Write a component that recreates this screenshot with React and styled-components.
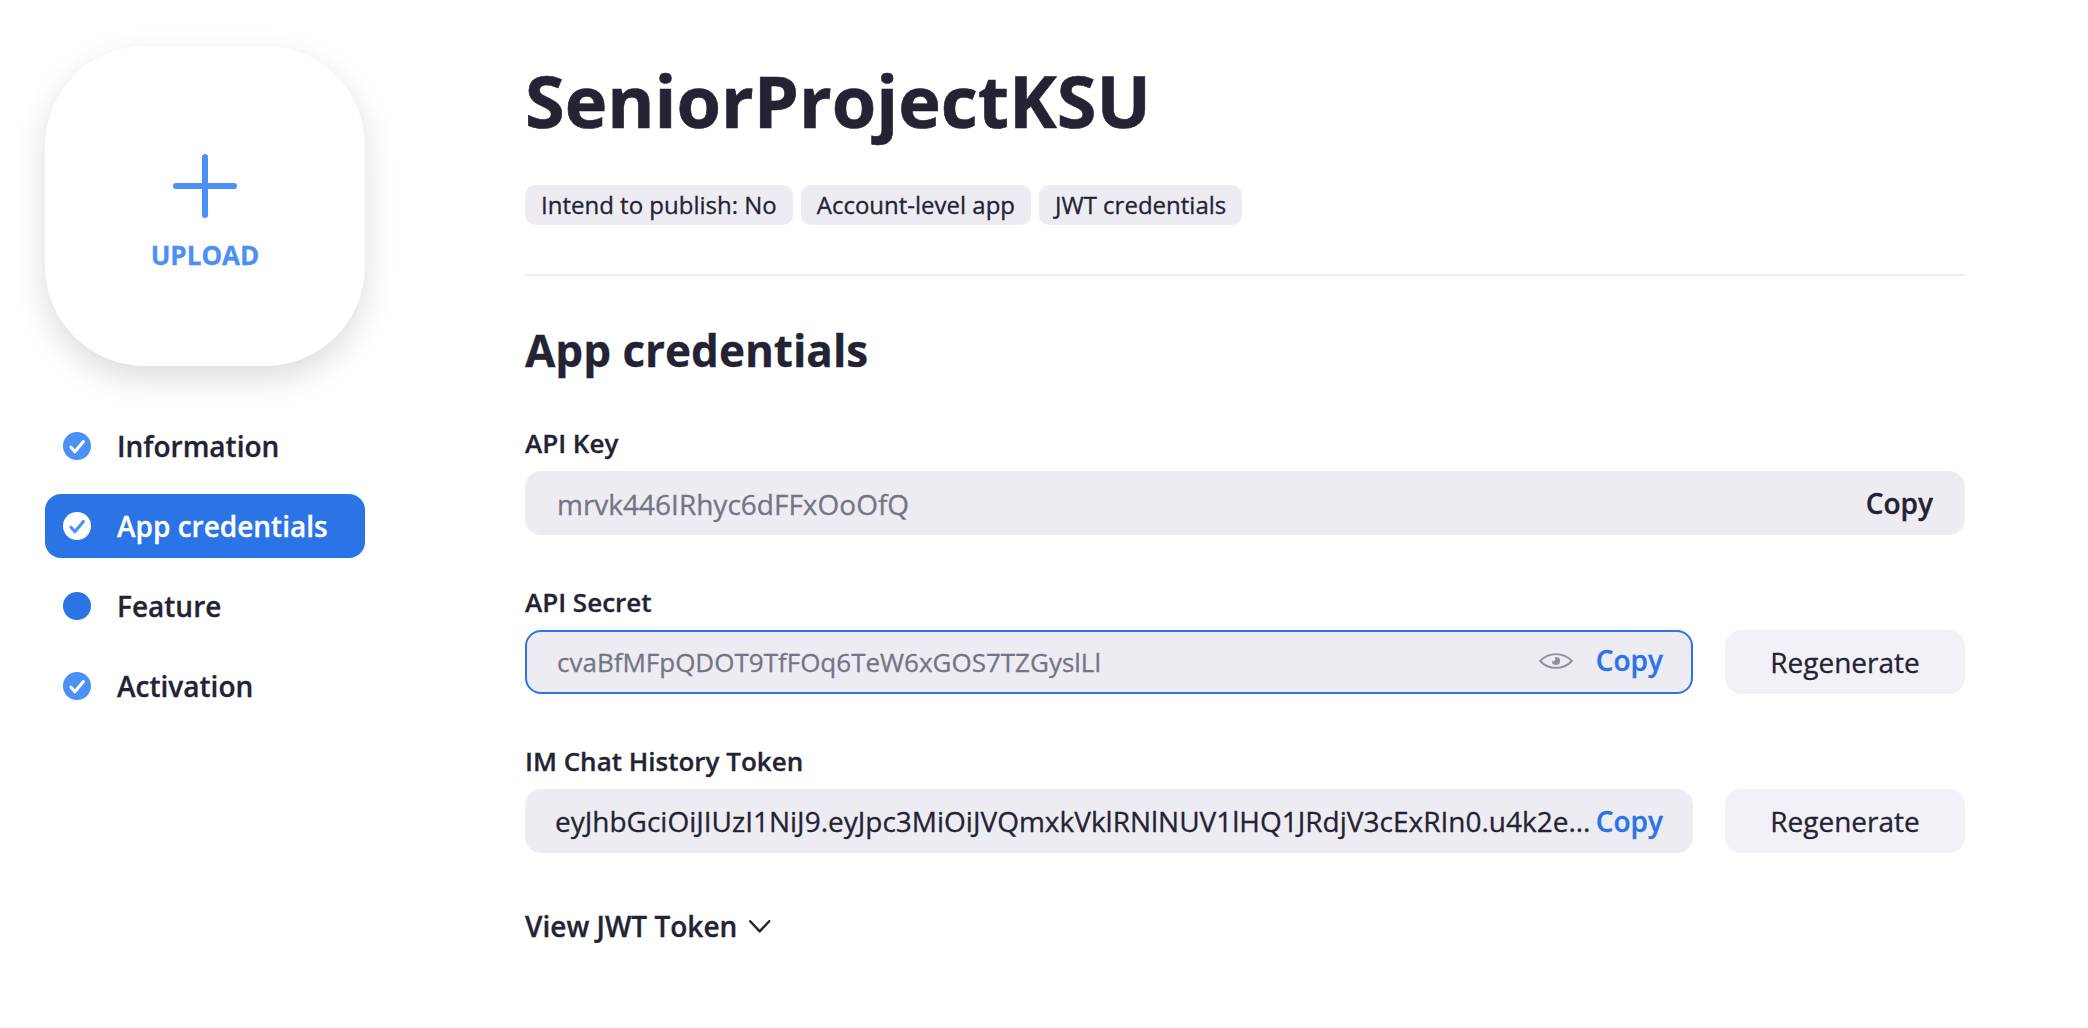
import React from 'react';
import styled, { createGlobalStyle, css } from 'styled-components';

const GlobalStyle = createGlobalStyle`
  * { box-sizing: border-box; }
  body {
    margin: 0;
    background: #ffffff;
    color: #232333;
    font-family: 'Open Sans', sans-serif;
    -webkit-text-stroke: 0.3px currentColor;
  }
  button { font: inherit; color: inherit; border: 0; padding: 0; margin: 0; background: none; cursor: pointer; }
  svg { display: block; flex: none; }
`;

const Page = styled.div`
  display: flex;
  align-items: flex-start;
  gap: 160px;
  width: 2088px;
  height: 1028px;
  padding: 46px 123px 0 45px;
  overflow: hidden;
`;

const Sidebar = styled.aside`
  width: 320px;
  flex: none;
`;

const UploadTile = styled.button`
  display: flex;
  flex-direction: column;
  align-items: center;
  width: 320px;
  height: 320px;
  padding-top: 108px;
  border-radius: 100px;
  background: #ffffff;
  box-shadow: 0 12px 32px rgba(0, 0, 0, 0.14);
`;

const UploadLabel = styled.span`
  margin-top: 19px;
  color: #4a90f5;
  font-size: 26px;
  line-height: 36px;
  font-weight: 700;
`;

const Steps = styled.nav`
  display: flex;
  flex-direction: column;
  gap: 16px;
  margin-top: 48px;
`;

const Step = styled.a`
  display: flex;
  align-items: center;
  gap: 26px;
  height: 64px;
  padding-left: 18px;
  border-radius: 16px;
  font-size: 28px;
  font-weight: 600;
  line-height: 38px;
  ${({ $active }) => $active && css`
    background: #2b74e6;
    color: #ffffff;
  `}
`;

const Main = styled.main`
  flex: 1;
  min-width: 0;
`;

const Title = styled.h1`
  margin: 5px 0 0;
  font-size: 72px;
  line-height: 98px;
  font-weight: 700;
  -webkit-text-stroke-width: 0.6px;
`;

const Tags = styled.div`
  display: flex;
  gap: 8px;
  margin-top: 36px;
`;

const Tag = styled.span`
  height: 40px;
  padding: 0 16px;
  border-radius: 10px;
  background: #edecf3;
  font-size: 24px;
  line-height: 40px;
`;

const Divider = styled.hr`
  height: 2px;
  margin: 49px 0 0;
  border: 0;
  background: #edecf3;
`;

const SectionTitle = styled.h2`
  margin: 44px 0 0;
  font-size: 44px;
  line-height: 60px;
  font-weight: 700;
`;

const Field = styled.section`
  margin-top: ${({ $top }) => $top}px;
`;

const FieldLabel = styled.div`
  height: 36px;
  font-size: 26px;
  line-height: 36px;
  font-weight: 600;
`;

const FieldRow = styled.div`
  display: flex;
  gap: 32px;
  margin-top: 10px;
`;

const ValueBox = styled.div`
  display: flex;
  align-items: center;
  flex: 1;
  min-width: 0;
  height: 64px;
  padding: 0 ${({ $focused }) => ($focused ? 28 : 30)}px;
  border: ${({ $focused }) => ($focused ? '2px solid #2b74e6' : '0')};
  border-radius: 16px;
  background: #edecf3;
`;

const Value = styled.span`
  flex: 1;
  min-width: 0;
  overflow: hidden;
  white-space: nowrap;
  padding-left: ${({ $inset }) => $inset || 0}px;
  padding-top: ${({ $drop }) => $drop || 0}px;
  color: ${({ $muted }) => ($muted ? '#747487' : '#232333')};
  font-size: ${({ $size }) => $size || 28}px;
  line-height: 40px;
`;

const CopyButton = styled.button`
  margin-left: ${({ $gap }) => $gap || 0}px;
  margin-right: ${({ $end }) => $end || 0}px;
  padding-bottom: ${({ $lift }) => $lift || 0}px;
  color: ${({ $link }) => ($link ? '#2b74e6' : '#232333')};
  font-size: 28px;
  line-height: 38px;
  font-weight: 600;
`;

const RegenerateButton = styled.button`
  flex: none;
  width: 240px;
  height: 64px;
  border-radius: 16px;
  background: #f2f1f7;
  font-size: 28px;
  line-height: 38px;
`;

const TokenToggle = styled.button`
  display: flex;
  align-items: center;
  gap: 12px;
  margin-top: 54px;
  font-size: 28px;
  line-height: 38px;
  font-weight: 600;
`;

const PlusIcon = () => (
  <svg width="64" height="64" viewBox="0 0 64 64">
    <path d="M32 3V61M3 32H61" stroke="#4a90f5" strokeWidth="6" strokeLinecap="round" />
  </svg>
);

const StepIcon = ({ fill, check }) => (
  <svg width="28" height="28" viewBox="0 0 28 28">
    <circle cx="14" cy="14" r="14" fill={fill} />
    {check && (
      <path d="M8 15.2L11.9 19.8L20.4 9.4" fill="none" stroke={check} strokeWidth="3.1" strokeLinecap="round" strokeLinejoin="round" />
    )}
  </svg>
);

const EyeIcon = () => (
  <svg width="34" height="18" viewBox="0 0 34 18">
    <path d="M1.2 8C9.5-1.2 24.5-1.2 32.8 8C24.5 17.2 9.5 17.2 1.2 8Z" fill="none" stroke="#8f8fa0" strokeWidth="1.9" strokeLinejoin="round" />
    <path d="M17 3.9A4.1 4.1 0 1 1 12.9 8V7.4A1.9 1.9 0 0 0 16 5V4Z" fill="#8f8fa0" />
  </svg>
);

const ChevronIcon = () => (
  <svg width="22" height="14" viewBox="0 0 22 14">
    <path d="M1.2 2.2L10.7 12.4L20.2 2.2" fill="none" stroke="#232333" strokeWidth="2.4" strokeLinecap="round" strokeLinejoin="round" />
  </svg>
);

const steps = [
  { name: 'Information', fill: '#4a90f5', check: '#ffffff' },
  { name: 'App credentials', fill: '#ffffff', check: '#4a90f5', active: true },
  { name: 'Feature', fill: '#2b74e6' },
  { name: 'Activation', fill: '#4a90f5', check: '#ffffff' },
];

const tags = ['Intend to publish: No', 'Account-level app', 'JWT credentials'];

export default function App() {
  return (
    <>
      <GlobalStyle />
      <Page>
        <Sidebar>
          <UploadTile>
            <PlusIcon />
            <UploadLabel>UPLOAD</UploadLabel>
          </UploadTile>
          <Steps>
            {steps.map((step) => (
              <Step key={step.name} $active={step.active}>
                <StepIcon fill={step.fill} check={step.check} />
                {step.name}
              </Step>
            ))}
          </Steps>
        </Sidebar>
        <Main>
          <Title>SeniorProjectKSU</Title>
          <Tags>
            {tags.map((tag) => <Tag key={tag}>{tag}</Tag>)}
          </Tags>
          <Divider />
          <SectionTitle>App credentials</SectionTitle>
          <Field $top={45}>
            <FieldLabel>API Key</FieldLabel>
            <FieldRow>
              <ValueBox>
                <Value $muted $inset={2} $drop={2}>mrvk446IRhyc6dFFxOoOfQ</Value>
                <CopyButton $end={2}>Copy</CopyButton>
              </ValueBox>
            </FieldRow>
          </Field>
          <Field $top={49}>
            <FieldLabel>API Secret</FieldLabel>
            <FieldRow>
              <ValueBox $focused>
                <Value $muted $inset={2} $size={26}>cvaBfMFpQDOT9TfFOq6TeW6xGOS7TZGyslLl</Value>
                <EyeIcon />
                <CopyButton $link $gap={23} $lift={4}>Copy</CopyButton>
              </ValueBox>
              <RegenerateButton>Regenerate</RegenerateButton>
            </FieldRow>
          </Field>
          <Field $top={49}>
            <FieldLabel>IM Chat History Token</FieldLabel>
            <FieldRow>
              <ValueBox>
                <Value>eyJhbGciOiJIUzI1NiJ9.eyJpc3MiOiJVQmxkVklRNlNUV1lHQ1JRdjV3cExRIn0.u4k2e...</Value>
                <CopyButton $link>Copy</CopyButton>
              </ValueBox>
              <RegenerateButton>Regenerate</RegenerateButton>
            </FieldRow>
          </Field>
          <TokenToggle>
            View JWT Token
            <ChevronIcon />
          </TokenToggle>
        </Main>
      </Page>
    </>
  );
}
